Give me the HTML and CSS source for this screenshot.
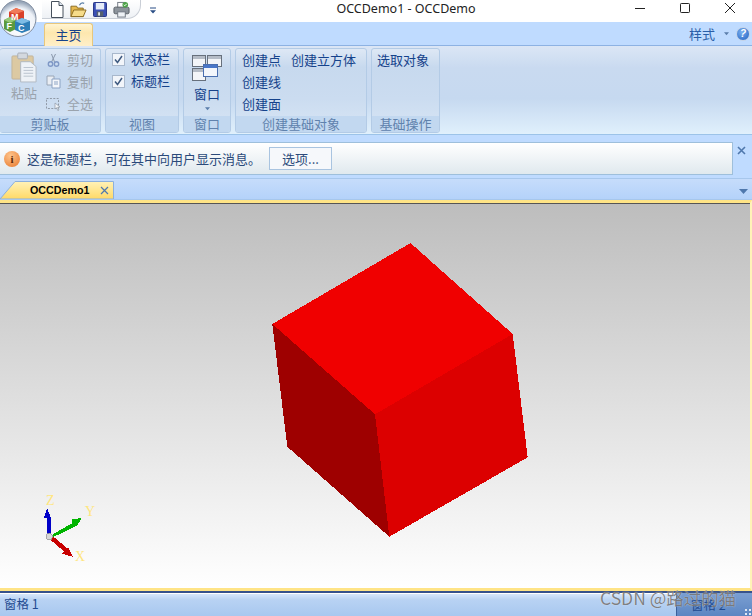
FILE: index.html
```html
<!DOCTYPE html>
<html lang="zh">
<head>
<meta charset="utf-8">
<title>OCCDemo1 - OCCDemo</title>
<link rel="stylesheet" href="styles.css">
</head>
<body>
<div class="app">
  <header class="titlebar">
    <div class="qat">
      <svg class="qi" viewBox="0 0 14 17"><path d="M1.500 .5H9l4 4v12H1.500z" fill="#fff" stroke="#46505c"/><path d="M9 .5v4h4" fill="#dde6f0" stroke="#46505c"/></svg>
      <svg class="qi wide" viewBox="0 0 18 17"><path d="M1 5h6l1 2h6v9H1z" fill="#e6b94e" stroke="#8a6a20"/><path d="M1 16l3-7h13l-3 7z" fill="#f6dc8a" stroke="#8a6a20"/><path d="M10 4c1-2 3-3 5-2" fill="none" stroke="#5a7fa8" stroke-width="1.300"/></svg>
      <svg class="qi" viewBox="0 0 15 16"><rect x=".5" y=".5" width="14" height="15" rx="1" fill="#3a4fb5" stroke="#1f2d80"/><rect x="3" y="1" width="9" height="7" fill="#e6ecf8"/><rect x="4" y="10" width="7" height="5.500" fill="#55606e"/><rect x="5.500" y="11" width="2" height="3.500" fill="#dfe5ee"/></svg>
      <svg class="qi wide" viewBox="0 0 18 17"><rect x="5" y="1" width="8" height="6" fill="#fff" stroke="#6f7680"/><rect x="1" y="6" width="16" height="7" rx="1.500" fill="#8d949c" stroke="#565c63"/><rect x="5" y="11" width="8" height="5.500" fill="#eef2f6" stroke="#6f7680"/><circle cx="13" cy="3.500" r="3" fill="#4fa34a"/><path d="M11.500 3.500l1 1 2-2" fill="none" stroke="#fff"/></svg>
    </div>
    <svg class="qat-more" viewBox="0 0 7 8"><path d="M0 0h7v1H0zM0 3h7L3.500 7z" fill="#2b4f86"/></svg>
    <div class="wintitle">OCCDemo1 - OCCDemo</div>
    <div class="winbtns">
      <svg viewBox="0 0 12 12"><path d="M1 6.500h10" stroke="#222"/></svg>
      <svg viewBox="0 0 12 12"><rect x="1.500" y="1.500" width="9" height="9" rx=".8" fill="none" stroke="#222"/></svg>
      <svg viewBox="0 0 12 12"><path d="M1 1l10 10M11 1L1 11" stroke="#222"/></svg>
    </div>
  </header>

  <svg class="app-btn" viewBox="0 0 38 38">
    <defs>
      <radialGradient id="glass" cx="50%" cy="70%" r="65%"><stop offset="0" stop-color="#ffffff"/><stop offset=".75" stop-color="#eef2f8"/><stop offset="1" stop-color="#9aa8bb"/></radialGradient>
    </defs>
    <circle cx="18" cy="18.500" r="18" fill="url(#glass)" stroke="#7f8ca0"/>
    <path d="M9 12l7-4 8 3v9l-8 4-7-3z" fill="#d8402a"/>
    <path d="M9 12l7-4 8 3-8 3z" fill="#f07a5a"/>
    <path d="M4 20l6-3 6 3v9l-6 3-6-3z" fill="#5b9a3e"/>
    <path d="M4 20l6-3 6 3-6 3z" fill="#96c978"/>
    <path d="M15 21l7-3 8 3v9l-8 3-7-3z" fill="#2f7fb8"/>
    <path d="M15 21l7-3 8 3-8 3z" fill="#7fbde6"/>
    <text x="11" y="20" class="logo-l">M</text>
    <text x="6.500" y="29" class="logo-l">F</text>
    <text x="18" y="31" class="logo-l">C</text>
  </svg>

  <nav class="tabrow">
    <div class="tab">主页</div>
    <div class="style-menu">样式
      <svg class="caret" viewBox="0 0 6 4"><path d="M0 0h6L3 3.500z" fill="#5b7eab"/></svg>
      <span class="help">?</span>
    </div>
  </nav>

  <section class="ribbon">
    <div class="group g-clip">
      <div class="gbody clip-body">
        <div class="paste">
          <svg class="paste-ico" viewBox="0 0 28 32"><rect x="1" y="4" width="22" height="24" rx="1" fill="#dcc9a2" stroke="#c2b49a"/><rect x="7" y="1" width="10" height="6" rx="1" fill="#d3d8de" stroke="#a7adb5"/><path d="M10 10h10l6 5v16H10z" fill="#eef2f7" stroke="#b0b8c2"/><path d="M13 16h10M13 19h10M13 22h10M13 25h10" stroke="#b9c3ce"/></svg>
          <span class="off">粘贴</span>
        </div>
        <div class="clip-list">
          <div class="cmd off"><svg class="si" viewBox="0 0 14 14"><path d="M5 1l3 8M9 1L5 9" stroke="#8b98ab" fill="none"/><circle cx="4" cy="11" r="2.200" fill="none" stroke="#7f98c6" stroke-width="1.400"/><circle cx="10" cy="11" r="2.200" fill="none" stroke="#7f98c6" stroke-width="1.400"/></svg>剪切</div>
          <div class="cmd off"><svg class="si" viewBox="0 0 15 14"><path d="M1 1h7v9H1z" fill="#e9edf3" stroke="#9aa6b6"/><path d="M6 4h8v9H6z" fill="#f4f6fa" stroke="#8ca3c4"/><path d="M8 7h4M8 9h4" stroke="#8ca3c4"/></svg>复制</div>
          <div class="cmd off"><svg class="si" viewBox="0 0 15 14"><rect x=".5" y="1.500" width="12" height="10" fill="none" stroke="#8f99a6" stroke-dasharray="2 1.400"/><path d="M9 6l5 4-2.400.4L13 13l-1.200.6-1.200-2.800L9 12z" fill="#f2f4f7" stroke="#8f99a6" stroke-width=".7"/></svg>全选</div>
        </div>
      </div>
      <div class="gfoot">剪贴板</div>
    </div>

    <div class="group g-view">
      <div class="gbody view-body">
        <label class="check"><span class="box"><svg viewBox="0 0 9 9"><path d="M1 4.500l2.500 3L8 1" fill="none" stroke="#3f5a80" stroke-width="1.500"/></svg></span>状态栏</label>
        <label class="check"><span class="box"><svg viewBox="0 0 9 9"><path d="M1 4.500l2.500 3L8 1" fill="none" stroke="#3f5a80" stroke-width="1.500"/></svg></span>标题栏</label>
      </div>
      <div class="gfoot">视图</div>
    </div>

    <div class="group g-win">
      <div class="gbody win-body">
        <svg class="win-ico" viewBox="0 0 30 26"><rect x=".5" y=".5" width="13" height="11" fill="#f3f5f8" stroke="#67707c"/><rect x="1" y="1" width="12" height="3" fill="#b5bcc6"/><rect x="15.500" y=".5" width="14" height="11" fill="#f3f5f8" stroke="#67707c"/><rect x="16" y="1" width="13" height="3" fill="#b5bcc6"/><rect x=".5" y="13.500" width="13" height="12" fill="#f3f5f8" stroke="#67707c"/><rect x="1" y="14" width="12" height="3" fill="#b5bcc6"/><rect x="11.500" y="9.500" width="14" height="12" fill="#f3f6fb" stroke="#4a6fb0"/><rect x="12" y="10" width="13" height="3" fill="#4a77c8"/></svg>
        <span class="win-label">窗口</span>
        <svg class="win-caret" viewBox="0 0 6 4"><path d="M0 0h6L3 3.500z" fill="#5b7eab"/></svg>
      </div>
      <div class="gfoot">窗口</div>
    </div>

    <div class="group g-create">
      <div class="gbody create-body">
        <span>创建点</span><span>创建立方体</span>
        <span>创建线</span><span></span>
        <span>创建面</span><span></span>
      </div>
      <div class="gfoot">创建基础对象</div>
    </div>

    <div class="group g-base">
      <div class="gbody base-body"><span>选取对象</span></div>
      <div class="gfoot">基础操作</div>
    </div>
  </section>

  <section class="msgband">
    <div class="msgbar">
      <span class="info-ico">i</span>
      <span class="msg">这是标题栏，可在其中向用户显示消息。</span>
      <button class="opt">选项...</button>
    </div>
    <svg class="msg-close" viewBox="0 0 9 9"><path d="M1 1l7 7M8 1L1 8" stroke="#4f78ad" stroke-width="1.600"/></svg>
  </section>

  <section class="doctabs">
    <div class="doctab">
      <svg class="doctab-shape" viewBox="0 0 115 18" preserveAspectRatio="none"><defs><linearGradient id="dt" x1="0" y1="0" x2="0" y2="1"><stop offset="0" stop-color="#fff2b8"/><stop offset="1" stop-color="#ffd966"/></linearGradient></defs><path d="M0 18L15 .5h98.500V18z" fill="url(#dt)" stroke="#8db0dc"/></svg>
      <span class="doctab-name">OCCDemo1</span>
      <svg class="doctab-x" viewBox="0 0 9 9"><path d="M1 1l7 7M8 1L1 8" stroke="#4f78ad" stroke-width="1.200"/></svg>
    </div>
    <svg class="tabs-menu" viewBox="0 0 9 5"><path d="M0 0h9L4.500 5z" fill="#4f78ad"/></svg>
  </section>

  <main class="viewport">
    <svg class="scene" viewBox="0 0 750 385">
      <g>
        <polygon points="410.500,40 272.300,121 375,211.300 512.700,131" fill="#f00000"/>
        <polygon points="272.300,121 375,211.300 389.300,333.700 287.300,243.700" fill="#9e0000"/>
        <polygon points="375,211.300 512.700,131 527.700,254.300 389.300,333.700" fill="#dc0000"/>
      </g>
      <g>
        <polygon points="46.700,332 46.700,315 44,315 47,305 51,315 51,332" fill="#0000c8"/>
        <polygon points="51.700,332 72.500,320 71.700,316.500 81.700,315 76.700,323 75,323.700 53.300,334" fill="#00b400"/>
        <polygon points="52,332.500 67,345 68,344 73.300,354 62,350.500 64,348.500 49.500,336" fill="#c80000"/>
        <circle cx="49.300" cy="333.700" r="3.300" fill="#d8d8d8" stroke="#9a9a9a" stroke-width=".8"/>
        <text x="46" y="302" class="axis">Z</text>
        <text x="85" y="313" class="axis">Y</text>
        <text x="75" y="358" class="axis">X</text>
      </g>
    </svg>
  </main>

  <footer class="status">
    <div class="pane1">窗格 1</div>
    <div class="pane2">窗格 2<span class="grip"></span></div>
  </footer>
  <div class="watermark">CSDN @路过的猫</div>
</div>
</body>
</html>
```

FILE: styles.css
```css
* { box-sizing: border-box; }
html, body { margin: 0; height: 100%; }
body { background: #fff; overflow: hidden; }
.app {
  position: relative; width: 752px; height: 616px;
  display: flex; flex-direction: column; overflow: hidden;
  font-family: "Noto Sans CJK SC", "Liberation Sans", sans-serif;
  font-size: 13px; color: #15428b;
}

/* application button sits over the title and tab rows */
.app-btn { position: absolute; left: 0; top: 0; width: 38px; height: 38px; z-index: 3; }
.logo-l { font: bold 9px "Liberation Sans", sans-serif; fill: #fff; }

/* title bar */
.titlebar { height: 22px; flex: none; background: #fff; display: flex; align-items: center; position: relative; padding-left: 42px; }
.qat {
  height: 19px; width: 99px; margin-top: -3px; padding-left: 8px;
  border: 1px solid #c9ced6; border-top: 0; border-left: 0; border-radius: 0 0 14px 0;
  display: flex; align-items: center; gap: 6px; background: linear-gradient(#fff, #eef1f5);
}
.qi { width: 14px; height: 17px; flex: none; }
.qi.wide { width: 17px; }
.qat-more { width: 6px; height: 8px; margin-left: 9px; margin-top: -1px; flex: none; }
.wintitle {
  position: absolute; left: 0; right: 0; top: 0; height: 18px; line-height: 17px; text-align: center;
  font-family: "Noto Sans", "Liberation Sans", sans-serif; font-size: 12.500px; color: #222; padding-left: 60px;
}
.winbtns { margin-left: auto; display: flex; gap: 33px; padding-right: 16px; margin-top: -6px; position: relative; }
.winbtns svg { width: 12px; height: 12px; }

/* tab row */
.tabrow { height: 24px; flex: none; background: #bfdbff; border-bottom: 1px solid #8db2e3; display: flex; align-items: flex-end; padding-left: 44px; }
.tab {
  width: 49px; height: 23px; margin-bottom: -1px; text-align: center; line-height: 21px;
  background: linear-gradient(#fff4d2, #fde7ae 40%, #ffefc8); border: 1px solid #e8c77c; border-bottom: 0; border-radius: 3px 3px 0 0;
  color: #15428b;
}
.style-menu { margin-left: auto; height: 23px; display: flex; align-items: center; padding-right: 2px; color: #2a5ea8; }
.caret { width: 5px; height: 4px; margin: 0 7px 0 9px; }
.win-caret { width: 5px; height: 4px; margin-top: 4px; }
.help {
  width: 14px; height: 14px; border-radius: 50%; background: radial-gradient(circle at 40% 35%, #7ab0f0, #1f5fc0);
  border: 1px solid #c5d3e6; color: #fff; font: italic bold 10px/12px "Liberation Sans", sans-serif; text-align: center;
}

/* ribbon */
.ribbon {
  height: 89px; flex: none; display: flex; gap: 4px; padding: 2px 0 3px 0;
  background: linear-gradient(#dbe6f5 0, #c9daf0 25%, #c6d9f0 60%, #e0f0fc 100%);
  border-bottom: 1px solid #9cc3e8;
}
.group {
  display: flex; flex-direction: column; height: 85px; border: 1px solid #b3cbe6; border-radius: 3px;
  background: linear-gradient(#dee8f5, #c7d9ee 22%, #cbdcf0 60%, #d8e6f5);
  overflow: hidden;
}
.gbody { flex: 1; min-height: 0; }
.gfoot { height: 16px; flex: none; text-align: center; line-height: 15px; background: #c2d8f0; color: #5f82ad; font-size: 13px; }
.g-clip { width: 101px; border-left: 0; }
.g-view { width: 74px; }
.g-win { width: 48px; }
.g-create { width: 132px; }
.g-base { width: 69px; }

.off { color: #9aa3ad; }
.clip-body { display: flex; padding: 0 0 0 8px; }
.paste { width: 32px; display: flex; flex-direction: column; align-items: center; }
.paste-ico { width: 27px; height: 31px; margin-top: 3px; }
.paste span { margin-top: 1px; line-height: 18px; }
.clip-list { display: flex; flex-direction: column; padding-left: 6px; }
.cmd { display: flex; align-items: center; gap: 6px; height: 22px; line-height: 22px; }
.si { width: 15px; height: 14px; flex: none; }

.view-body { padding: 0 0 0 6px; display: flex; flex-direction: column; }
.check { display: flex; align-items: center; height: 22px; line-height: 22px; gap: 6px; margin-top: -1px; }
.check + .check { margin-top: 0; }
.box { width: 13px; height: 13px; border: 1px solid #a9b8cc; background: #f2f5fa; display: flex; align-items: center; justify-content: center; }
.box svg { width: 9px; height: 9px; }

.win-body { display: flex; flex-direction: column; align-items: center; padding-top: 6px; }
.win-ico { width: 30px; height: 26px; }
.win-label { line-height: 18px; margin-top: 4px; }

.create-body { display: grid; grid-template-columns: 49px auto; grid-template-rows: repeat(3, 22px); padding: 0 0 0 6px; line-height: 22px; }
.base-body { padding: 0 0 0 5px; line-height: 22px; }

/* message bar */
.msgband { height: 44px; flex: none; background: #bfdbff; display: flex; align-items: flex-start; padding-top: 7px; border-bottom: 1px solid #a7c7ec; }
.msgbar {
  width: 733px; height: 33px; border: 1px solid #9ebfdb; border-left: 0;
  background: linear-gradient(#fff, #e0e9ee); display: flex; align-items: center; padding-left: 4px;
}
.info-ico {
  width: 16px; height: 16px; border-radius: 50%; background: radial-gradient(circle at 40% 30%, #ffc58c, #e6762a);
  color: #5a2a08; font: bold 11px/16px "Liberation Serif", serif; text-align: center; flex: none;
}
.msg { margin-left: 7px; color: #2b4a7a; font-size: 13px; margin-top: -1px; }
.opt {
  margin-left: 8px; width: 63px; height: 23px; padding: 0; border: 1px solid #a9c4e0; background: #f6f8fb;
  color: #2b4a7a; font: inherit; font-size: 13px;
}
.msg-close { width: 9px; height: 9px; margin: 4px 0 0 4px; }

/* document tabs */
.doctabs {
  height: 21px; flex: none; background: linear-gradient(#c6dcfb, #b4d2fa);
  display: flex; align-items: flex-end; justify-content: space-between; padding-right: 4px;
  border-bottom: 1px solid #a7c7ec;
}
.doctab { width: 115px; height: 18px; position: relative; display: flex; align-items: center; flex: none; }
.doctab-shape { position: absolute; inset: 0; width: 100%; height: 100%; }
.doctab-name { position: relative; margin-left: 30px; font: bold 10.700px "Liberation Sans", sans-serif; color: #000; }
.doctab-x { position: relative; width: 9px; height: 9px; margin-left: 11px; }
.tabs-menu { width: 9px; height: 5px; margin-bottom: 5px; }

/* 3D view */
.viewport {
  flex: 1; min-height: 0; background: linear-gradient(#bdbdbd, #fff);
  border-top: 3px solid #ffe486; border-bottom: 3px solid #ffe486; border-right: 2px solid #fff3b8;
  box-shadow: inset 0 1px 0 #555; position: relative;
}
.scene { display: block; width: 750px; height: 385px; shape-rendering: crispEdges; }
.axis { font: 14px "Liberation Serif", serif; fill: #ffe680; }

/* status bar */
.status {
  height: 25px; flex: none; display: flex; justify-content: space-between;
  background: linear-gradient(#dbe9fc, #b8d2f3 30%, #a8c8ef);
  border-top: 2px solid #37528b; box-shadow: inset 0 1px 0 #fff;
}
.pane1 { padding-left: 4px; line-height: 22px; font-size: 12.500px; color: #1f4a90; }
.pane2 { position: relative; width: 76px; padding-left: 14px; line-height: 23px; color: #1f4a90; background: linear-gradient(#7b9fd2, #5c86c2); border-left: 1px solid #3a5f9a; font-size: 12.500px; }
.grip {
  position: absolute; right: 0; bottom: 0; width: 8px; height: 8px;
  background: radial-gradient(circle, #dfe8f5 1px, transparent 1.200px) 0 0 / 4px 4px;
}

/* watermark */
.watermark {
  position: absolute; left: 600px; top: 588px; font-size: 17.500px; line-height: 20px;
  color: rgba(90, 90, 90, .75); text-shadow: 0 0 1px rgba(255,255,255,.8); white-space: nowrap;
}
```
